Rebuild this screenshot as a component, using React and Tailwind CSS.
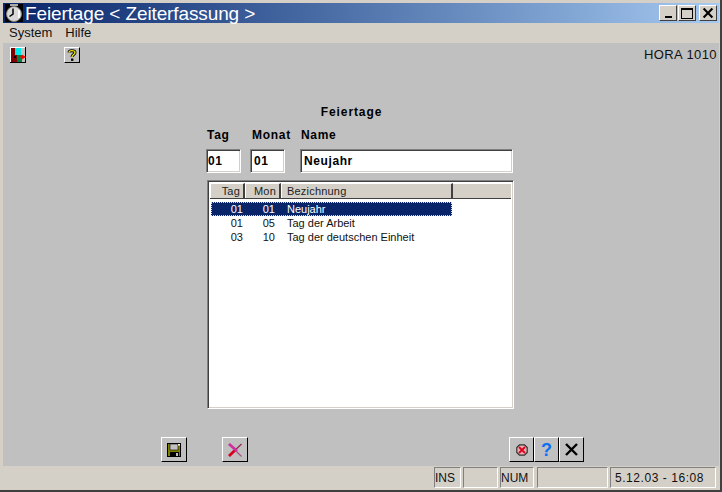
import React from "react";

const sunken = "border border-t-[#808080] border-l-[#808080] border-b-white border-r-white shadow-[inset_1px_1px_0_#404040,inset_-1px_-1px_0_#d4d0c8]";
const raised = "border border-t-white border-l-white border-b-black border-r-black bg-[#c0c0c0] flex items-center justify-center";

function ClockIcon() {
  return (
    <svg width="18" height="18" viewBox="0 0 18 18" className="block">
      <rect width="18" height="18" fill="#000" />
      <rect x="5" y="0" width="8" height="2" fill="#a8a8a8" />
      <circle cx="9" cy="10" r="7.5" fill="#d8d8d8" stroke="#808080" />
      <path d="M8 4.5V10L4.5 12.5" stroke="#000" strokeWidth="1.5" fill="none" />
      <path d="M14 6V14" stroke="#fff" strokeWidth="1.6" />
    </svg>
  );
}

function ExitIcon() {
  return (
    <svg width="16" height="16" viewBox="0 0 16 16" className="block">
      <rect x="0" y="0" width="16" height="16" fill="#c0c0c0" />
      <rect x="0" y="0" width="16" height="1" fill="#fff" />
      <rect x="0" y="0" width="1" height="16" fill="#fff" />
      <rect x="15" y="0" width="1" height="16" fill="#000" />
      <rect x="0" y="15" width="16" height="1" fill="#000" />
      <rect x="1" y="1" width="10" height="14" fill="#800000" />
      <rect x="5" y="1" width="6" height="7" fill="#00e8e8" />
      <rect x="7" y="8" width="5" height="7" fill="#008040" />
      <rect x="4" y="9" width="2" height="2" fill="#000" />
      <path d="M10 10H14M12 8L15 10L12 12Z" stroke="#ff0000" fill="#ff0000" strokeWidth="1" />
    </svg>
  );
}

function HelpIcon() {
  return (
    <div className="w-4 h-4 border border-t-white border-l-white border-b-black border-r-black bg-[#c0c0c0] flex items-center justify-center">
      <svg width="12" height="14" viewBox="0 0 12 14" className="block">
        <path d="M3 4.5C3 2 9 2 9 4.5C9 6.5 6 6.5 6 9" stroke="#000" strokeWidth="3" fill="none" />
        <path d="M3 4.5C3 2 9 2 9 4.5C9 6.5 6 6.5 6 9" stroke="#e8e000" strokeWidth="1.4" fill="none" />
        <rect x="5" y="10.5" width="2.4" height="2.4" fill="#000" />
      </svg>
    </div>
  );
}

function SaveIcon() {
  return (
    <svg width="14" height="14" viewBox="0 0 14 14" className="block">
      <rect x="0.5" y="0.5" width="13" height="13" fill="#808000" stroke="#000" />
      <rect x="3" y="1" width="8" height="6" fill="#c0c0c0" stroke="#000" strokeWidth="0.6" />
      <rect x="1" y="8" width="12" height="5" fill="#808000" />
      <rect x="3" y="9" width="9" height="4.5" fill="#000" />
      <rect x="9" y="10" width="2" height="3" fill="#c0c0c0" />
      <rect x="11" y="1" width="2" height="1.5" fill="#fff" />
    </svg>
  );
}

function CrossPink() {
  return (
    <svg width="14" height="14" viewBox="0 0 14 14" className="block">
      <path d="M1 13L13.5 1" stroke="#902040" strokeWidth="1.1" />
      <path d="M1 13L8 6.3" stroke="#d8001c" strokeWidth="2.8" />
      <path d="M1 1L13.5 13.5" stroke="#a05080" strokeWidth="1.1" />
      <path d="M1 1L9 8" stroke="#d030a0" strokeWidth="2.8" />
    </svg>
  );
}

function StopIcon() {
  return (
    <svg width="12" height="12" viewBox="0 0 12 12" className="block">
      <path d="M3.5 0.8H8.5L11.2 3.5V8.5L8.5 11.2H3.5L0.8 8.5V3.5Z" fill="#e8b0b0" stroke="#303030" strokeWidth="1.2" />
      <path d="M3 3L9 9M9 3L3 9" stroke="#e00020" strokeWidth="1.8" />
    </svg>
  );
}

function BlackX({ size = 15, w = 2.4 }) {
  return (
    <svg width={size} height={size} viewBox="0 0 15 15" className="block">
      <path d="M2 2L13 13M13 2L2 13" stroke="#000" strokeWidth={w} />
    </svg>
  );
}

function CaptionButton({ children, className = "" }) {
  return (
    <div className={`w-[18px] h-[16px] bg-[#d4d0c8] border border-t-white border-l-white border-b-[#404040] border-r-[#404040] flex items-center justify-center ${className}`}>
      {children}
    </div>
  );
}

function Field({ value, className }) {
  return (
    <div className={`h-[24px] bg-white flex items-center text-[12px] font-bold tracking-[0.6px] text-black ${sunken} ${className}`}>
      {value}
    </div>
  );
}

function Head({ className, children, align = "pl-[5px]" }) {
  return (
    <div className={`h-full flex items-center bg-[#d4d0c8] text-[11px] tracking-[0.2px] text-[#222] border-t border-l border-t-white border-l-white border-r-2 border-r-[#404040] ${align} ${className}`}>
      {children}
    </div>
  );
}

const rows = [
  ["01", "01", "Neujahr"],
  ["01", "05", "Tag der Arbeit"],
  ["03", "10", "Tag der deutschen Einheit"],
];

function Row({ r, selected }) {
  return (
    <div className={`w-[241px] h-[14px] flex items-center text-[11px] leading-none ${selected ? "bg-[#0a246a] text-white outline-1 outline-dotted outline-[#e8e0a0] -outline-offset-1" : "text-[#111]"}`}>
      <span className="w-[32px] text-right">{r[0]}</span>
      <span className="w-[32px] text-right">{r[1]}</span>
      <span className="ml-[12px]">{r[2]}</span>
    </div>
  );
}

function Panel({ className, children }) {
  return (
    <div className={`h-[21px] flex items-center border border-t-[#808080] border-l-[#808080] border-b-white border-r-white text-[12px] text-[#111] ${className}`}>
      {children}
    </div>
  );
}

export default function App() {
  return (
    <div className="w-[722px] h-[492px] flex flex-col bg-[#d4d0c8] pt-[3px] pl-[3px] pr-[1px] pb-[1px] border-b-2 border-r-2 border-b-[#404040] border-r-[#404040] overflow-hidden" style={{ fontFamily: '"Liberation Sans", Arial, sans-serif' }}>
      <div className="h-[20px] shrink-0 flex items-center bg-gradient-to-r from-[#0a246a] to-[#a6caf0] pr-[2px]">
        <div className="ml-[2px]"><ClockIcon /></div>
        <span className="ml-[2px] text-white text-[19px] tracking-[-0.12px] leading-none whitespace-nowrap">Feiertage &lt; Zeiterfassung &gt;</span>
        <div className="ml-auto flex items-center">
          <CaptionButton>
            <div className="w-[7px] h-[2px] bg-black mt-[7px]" />
          </CaptionButton>
          <CaptionButton className="ml-[1px]">
            <div className="w-[12px] h-[11px] border border-black border-t-2" />
          </CaptionButton>
          <CaptionButton className="ml-[3px]"><BlackX size={12} w={2.6} /></CaptionButton>
        </div>
      </div>

      <div className="h-[20px] shrink-0 flex items-center text-[13px] text-[#111] pl-[6px]">
        <span>System</span>
        <span className="ml-[13px]">Hilfe</span>
      </div>

      <div className="flex-1 min-h-0 bg-[#c0c0c0] flex flex-col">
        <div className="h-[24px] shrink-0 flex items-center pl-[7px] pr-[2px]">
          <ExitIcon />
          <div className="ml-[38px]"><HelpIcon /></div>
          <span className="ml-auto text-[13px] tracking-[0.4px] text-[#111]">HORA 1010</span>
        </div>

        <div className="h-[52px] shrink-0 flex items-end justify-center">
          <span className="text-[12px] font-bold tracking-[0.9px] text-black mr-[19px] leading-[14px]">Feiertage</span>
        </div>

        <div className="h-[29px] shrink-0 flex items-center pl-[204px] pt-[2px] text-[12px] font-bold tracking-[0.7px] text-black">
          <span className="w-[45px]">Tag</span>
          <span className="w-[49px]">Monat</span>
          <span>Name</span>
        </div>

        <div className="shrink-0 flex pl-[203px] mt-[1px]">
          <Field value="01" className="w-[35px] pl-[1px]" />
          <Field value="01" className="w-[35px] ml-[9px] pl-[3px]" />
          <Field value="Neujahr" className="w-[213px] ml-[15px] pl-[3px]" />
        </div>

        <div className={`w-[307px] h-[229px] ml-[204px] mt-[7px] shrink-0 bg-white flex flex-col p-[2px] ${sunken}`}>
          <div className="h-[16px] shrink-0 flex bg-[#d4d0c8] border-b border-b-[#404040]">
            <Head className="w-[35px] justify-end pr-[3px]" align="">Tag</Head>
            <Head className="w-[36px] justify-end pr-[3px]" align="">Mon</Head>
            <Head className="w-[172px]">Bezichnung</Head>
            <div className="flex-1 border-t border-t-white" />
          </div>
          <div className="pl-[1px] pt-[3px]">
            {rows.map((r, i) => <Row key={i} r={r} selected={i === 0} />)}
          </div>
        </div>

        <div className="shrink-0 flex mt-[28px] pl-[158px]">
          <div className={`w-[26px] h-[25px] ${raised}`}><SaveIcon /></div>
          <div className={`w-[26px] h-[25px] ml-[35px] ${raised}`}><CrossPink /></div>
          <div className={`w-[25px] h-[25px] ml-[261px] ${raised}`}><StopIcon /></div>
          <div className={`w-[25px] h-[25px] ${raised}`}>
            <span className="text-[#0a70f0] text-[18px] font-bold leading-none">?</span>
          </div>
          <div className={`w-[25px] h-[25px] ${raised}`}><BlackX /></div>
        </div>
      </div>

      <div className="h-[23px] shrink-0 flex items-center pl-[431px]">
        <Panel className="w-[27px]">INS</Panel>
        <Panel className="w-[35px] ml-[2px]" />
        <Panel className="w-[34px] ml-[2px]">NUM</Panel>
        <Panel className="w-[71px] ml-[3px]" />
        <Panel className="w-[106px] ml-[2px] pl-[4px] tracking-[0.55px]">5.12.03 - 16:08</Panel>
      </div>
    </div>
  );
}
